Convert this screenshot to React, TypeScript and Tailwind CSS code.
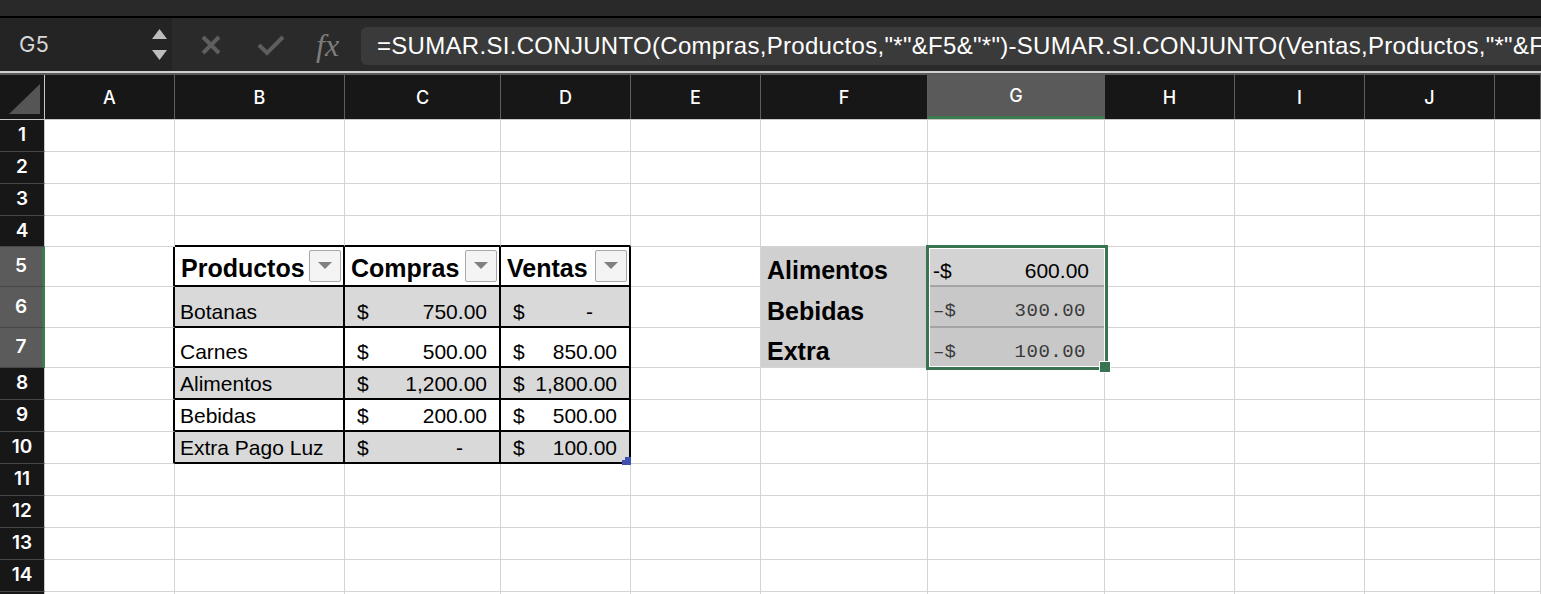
import React from 'react';

const cols = [
  { key: 'A', w: 'w-[130px]' },
  { key: 'B', w: 'w-[170px]' },
  { key: 'C', w: 'w-[156px]' },
  { key: 'D', w: 'w-[130px]' },
  { key: 'E', w: 'w-[130px]' },
  { key: 'F', w: 'w-[167px]' },
  { key: 'G', w: 'w-[177px]' },
  { key: 'H', w: 'w-[130px]' },
  { key: 'I', w: 'w-[130px]' },
  { key: 'J', w: 'w-[130px]' },
  { key: 'K', w: 'flex-1' },
];

const rows = [
  { n: 1, h: 'h-[32px]' },
  { n: 2, h: 'h-[32px]' },
  { n: 3, h: 'h-[32px]' },
  { n: 4, h: 'h-[31px]' },
  { n: 5, h: 'h-[40px]' },
  { n: 6, h: 'h-[41px]' },
  { n: 7, h: 'h-[40px]' },
  { n: 8, h: 'h-[32px]' },
  { n: 9, h: 'h-[32px]' },
  { n: 10, h: 'h-[32px]' },
  { n: 11, h: 'h-[32px]' },
  { n: 12, h: 'h-[32px]' },
  { n: 13, h: 'h-[32px]' },
  { n: 14, h: 'h-[32px]' },
  { n: 15, h: 'h-[32px]' },
];

// tabla B5:D10
const table: Record<number, [string, string, string]> = {
  6: ['Botanas', '750.00', '-'],
  7: ['Carnes', '500.00', '850.00'],
  8: ['Alimentos', '1,200.00', '1,800.00'],
  9: ['Bebidas', '200.00', '500.00'],
  10: ['Extra Pago Luz', '-', '100.00'],
};

const resumen: Record<number, [string, string]> = {
  5: ['Alimentos', '600.00'],
  6: ['Bebidas', '300.00'],
  7: ['Extra', '100.00'],
};

function FilterButton() {
  return (
    <div className="w-[32px] h-[32px] shrink-0 border border-[#a8a8a8] rounded-[2px] bg-[#f4f4f4] flex items-center justify-center">
      <svg width="16" height="9" viewBox="0 0 16 9">
        <path d="M1 1 L15 1 L8 8 Z" fill="#808080" />
      </svg>
    </div>
  );
}

function Money({ v }: { v: string }) {
  return (
    <>
      <span>$</span>
      <span className={v === '-' ? 'pr-[24px]' : ''}>{v}</span>
    </>
  );
}

function cellInfo(r: number, c: string) {
  const inTable = r >= 5 && r <= 10 && (c === 'B' || c === 'C' || c === 'D');
  let right = 'border-r border-r-[#d4d4d4]';
  let bottom = 'border-b border-b-[#d4d4d4]';
  let bg = '';
  let content: React.ReactNode = null;
  let layout = '';

  if (inTable || (c === 'A' && r >= 5 && r <= 10)) right = 'border-r-2 border-r-black';
  if (r >= 4 && r <= 10 && (c === 'B' || c === 'C' || c === 'D')) bottom = 'border-b-2 border-b-black';

  if (inTable && r % 2 === 0) bg = 'bg-[#d9d9d9]';

  if (r === 5 && inTable) {
    const label = c === 'B' ? 'Productos' : c === 'C' ? 'Compras' : 'Ventas';
    layout = 'flex items-end justify-between pl-[6px] pr-[2px] pb-[3px]';
    content = (
      <>
        <span className="text-[25px] font-bold leading-none pb-[1px]">{label}</span>
        <div className="self-center mt-[2px]">
          <FilterButton />
        </div>
      </>
    );
  } else if (inTable) {
    const d = table[r];
    if (c === 'B') {
      layout = 'flex items-end pl-[5px] pb-[4px]';
      content = <span className="text-[21px] leading-none">{d[0]}</span>;
    } else {
      layout = 'flex items-end justify-between pl-[12px] pr-[12px] pb-[4px] text-[21px] leading-none';
      content = <Money v={c === 'C' ? d[1] : d[2]} />;
    }
  }

  if (c === 'F' && r >= 5 && r <= 7) {
    bg = 'bg-[#d0d0d0]';
    right = 'border-r border-r-[#d0d0d0]';
    if (r < 7) bottom = 'border-b border-b-[#d0d0d0]';
    layout = 'flex items-end pl-[6px] pb-[3px]';
    content = <span className="text-[25px] font-bold leading-none">{resumen[r][0]}</span>;
  }

  if (c === 'G' && r >= 5 && r <= 7) {
    bg = r === 5 ? 'bg-[#d3d3d3]' : 'bg-[#c8c8c8]';
    if (r < 7) bottom = 'border-b-2 border-b-[#a4a4a4]';
    if (r === 5) {
      layout = 'flex items-end justify-between pl-[5px] pr-[15px] pb-[4px] text-[21px] leading-none';
      content = (
        <>
          <span>-$</span>
          <span>{resumen[r][1]}</span>
        </>
      );
    } else {
      layout =
        'flex items-end justify-between pl-[5px] pr-[18px] pb-[5px] text-[19px] leading-none text-[#3a3a3a] font-["Liberation_Mono",monospace]';
      content = (
        <>
          <span>–$</span>
          <span className="tracking-[0.5px]">{resumen[r][1]}</span>
        </>
      );
    }
  }

  return { cls: `${right} ${bottom} ${bg} ${layout}`, content };
}

export default function App() {
  const formula =
    '=SUMAR.SI.CONJUNTO(Compras,Productos,"*"&F5&"*")-SUMAR.SI.CONJUNTO(Ventas,Productos,"*"&F5&"*")';

  return (
    <div className="w-[1541px] h-[594px] overflow-hidden bg-white font-['Liberation_Sans',Arial,sans-serif] text-black">
      {/* barra superior */}
      <div className="h-[16px] bg-[#292929]" />
      <div className="h-[2px] bg-black" />

      {/* barra de fórmulas */}
      <div className="h-[53px] flex bg-[#2a2a2a]">
        <div className="w-[172px] shrink-0 bg-[#242424] flex items-center justify-between pl-[19px] pr-[5px]">
          <span className="text-[22px] text-[#d6d6d6] font-['Inter',sans-serif]">G5</span>
          <div className="flex flex-col gap-[11px]">
            <svg width="15" height="10" viewBox="0 0 15 10">
              <path d="M7.5 0 L15 10 L0 10 Z" fill="#bdbdbd" />
            </svg>
            <svg width="15" height="10" viewBox="0 0 15 10">
              <path d="M0 0 L15 0 L7.5 10 Z" fill="#bdbdbd" />
            </svg>
          </div>
        </div>
        <div className="w-[189px] shrink-0 flex items-center pl-[28px]">
          <svg width="22" height="22" viewBox="0 0 22 22">
            <path d="M3 3 L19 19 M19 3 L3 19" stroke="#5e5e5e" strokeWidth="4" />
          </svg>
          <svg width="30" height="24" viewBox="0 0 30 24" className="ml-[34px]">
            <path d="M3 12 L11 20 L27 4" stroke="#5e5e5e" strokeWidth="4" fill="none" />
          </svg>
          <span className="ml-[30px] text-[32px] italic text-[#7d7d7d] font-['Liberation_Serif',serif] leading-none">
            fx
          </span>
        </div>
        <div className="flex-1 mt-[9px] mb-[6px] bg-[#3a3a3a] rounded-l-[6px] pl-[16px] flex items-center overflow-hidden whitespace-nowrap text-white text-[24px] tracking-[0.3px]">
          {formula}
        </div>
      </div>
      <div className="h-[2px] bg-[#d0d0d0]" />
      <div className="h-[2px] bg-[#5a5a5a]" />

      {/* cuadrícula */}
      <div className="relative">
        <div className="flex h-[45px] bg-[#171717] border-b border-b-[#c8c8c8] font-['Inter',sans-serif] text-white text-[18px] font-medium">
          <div className="w-[45px] shrink-0 border-r border-r-[#c8c8c8] flex items-end justify-end pr-[4px] pb-[5px]">
            <svg width="31" height="30" viewBox="0 0 31 30">
              <path d="M31 0 L31 30 L0 30 Z" fill="#555555" />
            </svg>
          </div>
          {cols.map((c) => (
            <div
              key={c.key}
              className={`${c.w} shrink-0 flex items-center justify-center ${
                c.key === 'G'
                  ? 'bg-[#5a5a5a] border-b-[3px] border-b-[#3e7a50] border-r border-r-[#5a5a5a]'
                  : 'border-r border-r-[#5e5e5e]'
              }`}
            >
              {c.key !== 'K' ? c.key : ''}
            </div>
          ))}
        </div>

        {rows.map((r) => {
          const sel = r.n >= 5 && r.n <= 7;
          return (
            <div key={r.n} className={`flex ${r.h}`}>
              <div
                className={`w-[45px] shrink-0 flex items-center justify-center font-['Inter',sans-serif] text-[19px] font-semibold text-white border-b border-b-[#474747] ${
                  sel ? 'bg-[#5b5b5b] border-r-[3px] border-r-[#3e7a50]' : 'bg-[#171717] border-r border-r-[#c8c8c8]'
                }`}
              >
                {r.n < 15 ? r.n : ''}
              </div>
              {cols.map((c) => {
                const info = cellInfo(r.n, c.key);
                return (
                  <div key={c.key} className={`${c.w} shrink-0 ${info.cls}`}>
                    {info.content}
                  </div>
                );
              })}
            </div>
          );
        })}

        {/* selección G5:G7 */}
        <div className="absolute left-[926px] top-[170px] w-[182px] h-[125px] border-[3px] border-[#3a7350] pointer-events-none">
          <div className="w-full h-full border border-white" />
        </div>
        <div className="absolute left-[1099px] top-[286px] w-[12px] h-[12px] bg-[#3a7350] border border-white" />

        {/* marca de redimensionar tabla */}
        <svg className="absolute left-[622px] top-[382px]" width="9" height="8" viewBox="0 0 9 8">
          <path d="M9 0 L9 8 L0 8 L0 3 L3 3 L3 0 Z" fill="#3f50b0" />
        </svg>
      </div>
    </div>
  );
}
